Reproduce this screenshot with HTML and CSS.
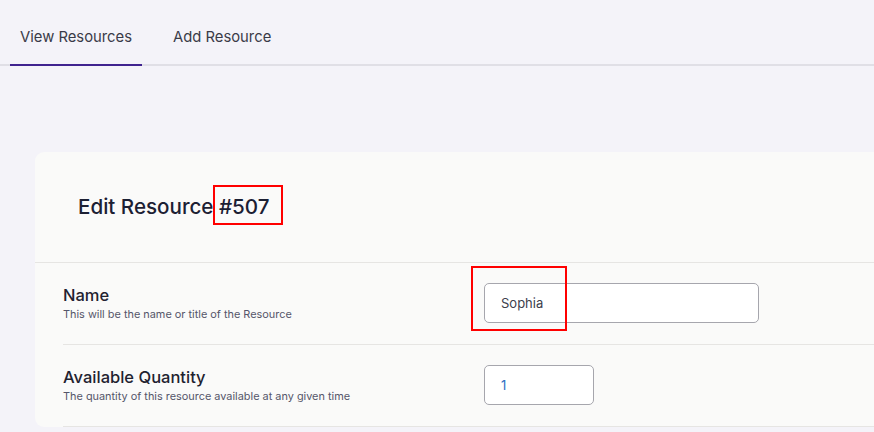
FILE: index.html
```html
<!DOCTYPE html>
<html lang="en">
<head>
<meta charset="utf-8">
<title>Edit Resource</title>
<link rel="stylesheet" href="styles.css">
</head>
<body>
<nav class="tabs">
  <a class="tab active">View Resources</a>
  <a class="tab">Add Resource</a>
</nav>
<main class="content">
  <section class="card">
    <header class="card-header">
      <h1 class="title">Edit Resource <span class="mark mark-title">#507</span></h1>
    </header>
    <div class="rows">
      <div class="row">
        <div class="label-col">
          <div class="label">Name</div>
          <div class="desc">This will be the name or title of the Resource</div>
        </div>
        <div class="field-col">
          <div class="field-wrap">
            <input class="input input-wide" type="text" value="Sophia">
            <div class="mark-box mark-input"></div>
          </div>
        </div>
      </div>
      <div class="row">
        <div class="label-col">
          <div class="label">Available Quantity</div>
          <div class="desc">The quantity of this resource available at any given time</div>
        </div>
        <div class="field-col">
          <input class="input input-small qty" type="text" value="1">
        </div>
      </div>
    </div>
  </section>
</main>
</body>
</html>
```
FILE: styles.css
```css
html, body {
  margin: 0;
  padding: 0;
  background: #f4f3f9;
  overflow: hidden;
  font-family: Inter, "Noto Sans", "Liberation Sans", sans-serif;
  color: #1f2230;
}

.tabs {
  display: flex;
  gap: 21px;
  padding-left: 10px;
  border-bottom: 2px solid #e0dfe6;
  height: 64px;
  box-sizing: content-box;
}

.tab {
  display: block;
  padding: 28px 10px 0;
  font-size: 14.8px;
  line-height: 18px;
  color: #3a3b48;
  margin-bottom: -2px;
  border-bottom: 2px solid transparent;
  height: 36px;
}

.tab.active {
  border-bottom-color: #40238f;
}

.content {
  padding: 86px 0 0 35px;
}

.card {
  width: 1000px;
  background: #fafaf9;
  border-radius: 9px;
}

.card-header {
  padding: 43px 43px;
  border-bottom: 1px solid #e6e5e3;
}

.title {
  margin: 0;
  font-size: 20.6px;
  line-height: 24px;
  font-weight: 500;
  color: #1c2033;
}

.mark {
  position: relative;
}

.mark-title::after {
  content: "";
  position: absolute;
  left: -6px;
  top: -9px;
  width: 66px;
  height: 36px;
  border: 2px solid #ff0000;
}

.rows {
  padding-left: 28px;
}

.row {
  display: flex;
  align-items: flex-start;
  padding: 20px 0 21px;
  border-bottom: 1px solid #e6e5e3;
}

.label-col {
  width: 421px;
  flex: none;
  padding-top: 2px;
}

.label {
  font-size: 16.5px;
  line-height: 20px;
  font-weight: 500;
  color: #1f2230;
}

.desc {
  font-size: 10.9px;
  line-height: 14px;
  margin-top: 2px;
  color: #55566a;
}

.field-wrap {
  position: relative;
}

.input {
  display: block;
  box-sizing: border-box;
  height: 40px;
  padding: 0 16px;
  border: 1px solid #a6a6ad;
  border-radius: 5px;
  background: #ffffff;
  font-family: Inter, "Noto Sans", "Liberation Sans", sans-serif;
  font-size: 13px;
  color: #3c3e4c;
}

.input-wide {
  width: 275px;
}

.input-small {
  width: 110px;
}

.qty {
  color: #2e6ec2;
}

.mark-box {
  position: absolute;
  border: 2px solid #ff0000;
  box-sizing: border-box;
}

.mark-input {
  left: -13px;
  top: -17px;
  width: 96px;
  height: 65px;
}
```
